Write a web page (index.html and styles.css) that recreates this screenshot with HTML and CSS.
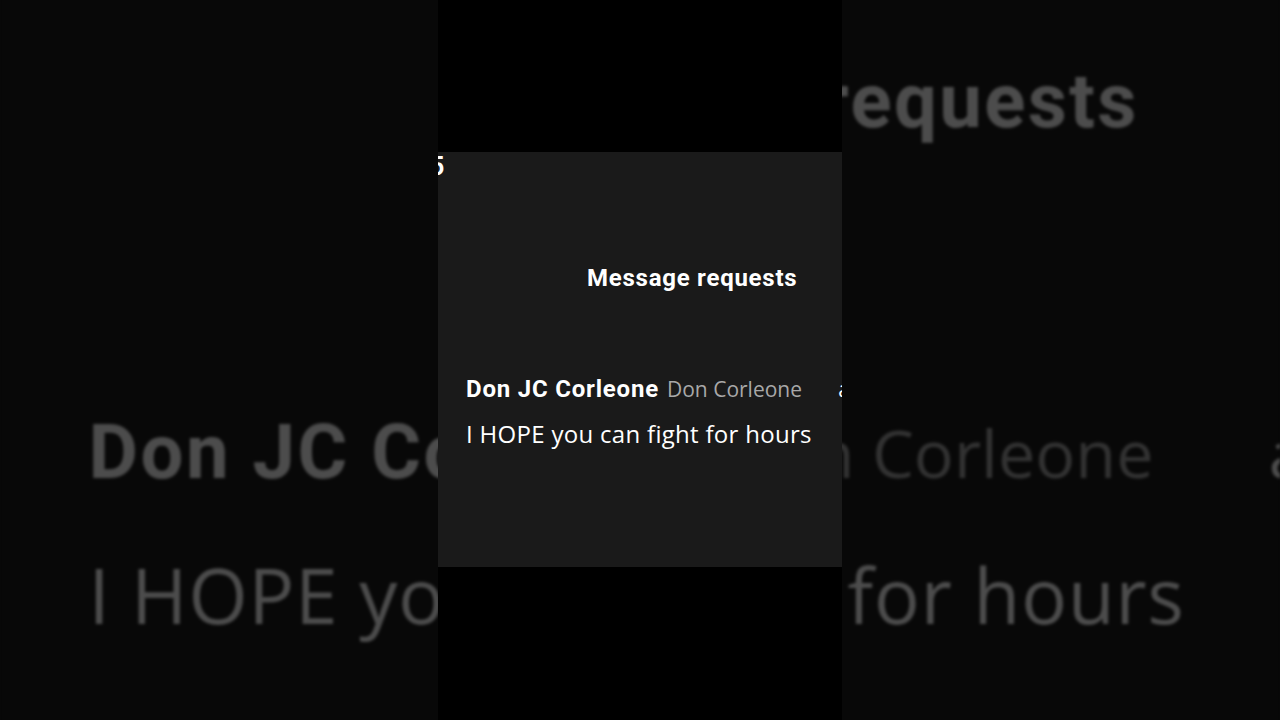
FILE: index.html
```html
<!DOCTYPE html>
<html lang="en">
<head>
<meta charset="utf-8">
<title>Message requests</title>
<link rel="stylesheet" href="styles.css">
</head>
<body>
<div class="stage">
  <div class="backdrop" aria-hidden="true">
    <div class="panel">
      <div class="top-strip"><span class="cut-digit">5</span></div>
      <h1 class="heading">Message requests</h1>
      <div class="sender-row">
        <span class="sender"><span class="name">Don JC Corleone</span><span class="handle">Don Corleone</span></span>
        <span class="cut-letter">a</span>
      </div>
      <p class="message">I HOPE you can fight for hours</p>
    </div>
  </div>
  <div class="column">
    <div class="panel">
      <div class="top-strip"><span class="cut-digit">5</span></div>
      <h1 class="heading">Message requests</h1>
      <div class="sender-row">
        <span class="sender"><span class="name">Don JC Corleone</span><span class="handle">Don Corleone</span></span>
        <span class="cut-letter">a</span>
      </div>
      <p class="message">I HOPE you can fight for hours</p>
    </div>
  </div>
</div>
</body>
</html>
```
FILE: styles.css
```css
* { box-sizing: border-box; }
html, body { margin: 0; padding: 0; background: #080808; }
.stage {
  position: relative;
  width: 1280px;
  height: 720px;
  overflow: hidden;
  background: #080808;
}
.backdrop {
  position: absolute;
  left: 438px;
  top: 152px;
  width: 404px;
  height: 415px;
  transform: scale(3.17);
  transform-origin: 50% 50%;
  filter: brightness(0.3) blur(0.5px);
}
.column {
  position: relative;
  width: 404px;
  height: 720px;
  margin-left: 438px;
  background: #000;
  padding-top: 152px;
}
.panel {
  width: 404px;
  height: 415px;
  background: #1a1a1a;
  overflow: hidden;
  display: flex;
  flex-direction: column;
  color: #fff;
}
.top-strip {
  height: 26px;
  font-family: "Roboto", "DejaVu Sans", sans-serif;
  font-weight: 700;
  font-size: 25px;
  line-height: 26px;
  margin-left: -8px;
  margin-top: 2px;
}
.heading {
  margin: 0;
  margin-top: 83px;
  padding-left: 149px;
  font-family: "Roboto", "DejaVu Sans", sans-serif;
  font-weight: 700;
  font-size: 24px;
  line-height: 30px;
  letter-spacing: 0.75px;
}
.sender-row {
  margin-top: 80px;
  padding-left: 28px;
  width: 412px;
  display: flex;
  justify-content: space-between;
  align-items: baseline;
  line-height: 32px;
}
.name {
  font-family: "Roboto", "DejaVu Sans", sans-serif;
  font-weight: 700;
  font-size: 24px;
  letter-spacing: 0.8px;
  margin-right: 8px;
}
.handle {
  font-family: "Open Sans", "Noto Sans", sans-serif;
  font-size: 21px;
  color: #a8a8a8;
}
.cut-letter {
  font-family: "Open Sans", "Noto Sans", sans-serif;
  font-size: 21px;
  color: #fff;
}
.message {
  margin: 10px 0 0 0;
  padding-left: 28px;
  font-family: "Open Sans", "Noto Sans", sans-serif;
  font-size: 24px;
  line-height: 32px;
  letter-spacing: 0.3px;
  color: #fff;
}
```
